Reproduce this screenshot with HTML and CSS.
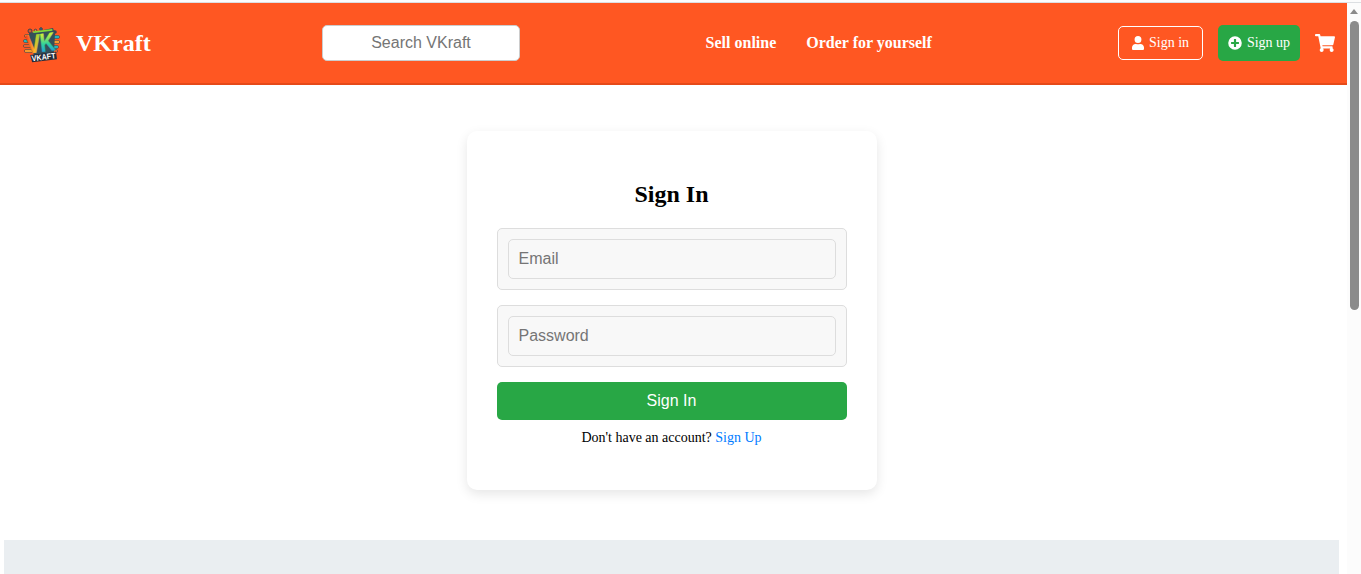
FILE: index.html
```html
<!DOCTYPE html>
<html lang="en">
<head>
<meta charset="utf-8">
<title>VKraft - Sign In</title>
<link rel="stylesheet" href="styles.css">
</head>
<body>
<div class="topline"></div>
<div class="viewport">
  <div class="page">
    <header class="header">
      <svg class="logo" viewBox="0 0 40 40" aria-label="VKraft logo">
        <g fill="none" stroke-linecap="round">
          <path stroke="#3b4650" stroke-width="3.600" d="M5 12h4M4 17h5M4 22h5M5 27h5M32 8h2M33 13h4M33 18h4M33 23h3M32 27h3"/>
          <path stroke="#f79a2c" stroke-width="2.400" d="M5 12h4M33 18h4M5 27h5"/>
          <path stroke="#25b3bd" stroke-width="2.400" d="M4 17h5M33 13h4M33 23h3"/>
          <path stroke="#f0602b" stroke-width="2.400" d="M4 22h5M32 27h3"/>
        </g>
        <path fill="#34505a" d="M8 9 32 4l2 6-1 18-19 5-5-10z"/>
        <circle cx="9" cy="7" r="2" fill="#d45632" stroke="#44404a"/>
        <circle cx="14.500" cy="6.500" r="1.300" fill="#e78a35" stroke="#44404a"/>
        <circle cx="20" cy="5" r="1.300" fill="#247ca0" stroke="#44404a"/>
        <defs>
          <linearGradient id="vee" x1="0" x2="1"><stop offset=".1" stop-color="#f5461f"/><stop offset=".5" stop-color="#ffb52c"/><stop offset="1" stop-color="#7fe03c"/></linearGradient>
          <linearGradient id="kay" x1="0" y1="0" x2="0" y2="1"><stop offset=".25" stop-color="#c4ee40"/><stop offset=".55" stop-color="#30d29c"/><stop offset=".85" stop-color="#1b9be0"/></linearGradient>
        </defs>
        <g transform="rotate(-7 20 20)">
          <text class="logo-big" x="5" y="28" fill="url(#vee)" stroke="url(#vee)" textLength="15" lengthAdjust="spacingAndGlyphs">V</text>
          <text class="logo-big" x="19" y="28" fill="url(#kay)" stroke="url(#kay)" textLength="15" lengthAdjust="spacingAndGlyphs">K</text>
          <path fill="#84dc38" d="M13 6.500h20v1.800H14z"/>
          <path fill="#252d3b" d="M8 29.500h26v7.500H9z"/>
          <text class="logo-small" x="9" y="36" textLength="24" lengthAdjust="spacingAndGlyphs">VKAFT</text>
        </g>
      </svg>
      <span class="brand">VKraft</span>
      <input class="search" type="text" placeholder="Search VKraft">
      <nav class="nav"><a>Sell online</a><a>Order for yourself</a></nav>
      <div class="actions">
        <a class="btn signin"><svg width="12" height="14" viewBox="0 0 448 512" preserveAspectRatio="none"><path fill="#fff" d="M224 256a128 128 0 1 0 0-256 128 128 0 0 0 0 256zm90 32h-17a174 174 0 0 1-146 0h-17C60 288 0 348 0 422v42c0 27 21 48 48 48h352c27 0 48-21 48-48v-42c0-74-60-134-134-134z"/></svg>Sign in</a>
        <a class="btn signup"><svg width="14" height="14" viewBox="0 0 512 512"><path fill="#fff" fill-rule="evenodd" d="M256 8a248 248 0 1 0 0 496 248 248 0 0 0 0-496zm144 276c0 7-5 12-12 12h-92v92c0 7-5 12-12 12h-56c-7 0-12-5-12-12v-92h-92c-7 0-12-5-12-12v-56c0-7 5-12 12-12h92v-92c0-7 5-12 12-12h56c7 0 12 5 12 12v92h92c7 0 12 5 12 12v56z"/></svg>Sign up</a>
        <svg class="cart" viewBox="0 0 576 512"><path fill="#fff" d="M528.120 301.319l47.273-208C578.806 78.301 567.391 64 551.990 64H159.208l-9.166-44.810C147.758 8.021 137.930 0 126.529 0H24C10.745 0 0 10.745 0 24v16c0 13.255 10.745 24 24 24h69.883l70.248 343.435C147.325 417.100 136 435.222 136 456c0 30.928 25.072 56 56 56s56-25.072 56-56c0-15.674-6.447-29.835-16.824-40h209.647C430.447 426.165 424 440.326 424 456c0 30.928 25.072 56 56 56s56-25.072 56-56c0-22.172-12.888-41.332-31.579-50.405l5.517-24.276c3.413-15.018-8.002-29.319-23.403-29.319H218.117l-6.545-32h293.145c11.206 0 20.920-7.754 23.403-18.681z"/></svg>
      </div>
    </header>
    <main class="main">
      <form class="card">
        <h2>Sign In</h2>
        <div class="field"><input type="email" placeholder="Email"></div>
        <div class="field"><input type="password" placeholder="Password"></div>
        <button class="submit" type="button">Sign In</button>
        <p class="switch">Don't have an account? <a>Sign Up</a></p>
      </form>
    </main>
    <div class="footer"></div>
  </div>
  <div class="scrollbar"><div class="arrow"></div><div class="thumb"></div></div>
</div>
</body>
</html>
```
FILE: styles.css
```css
* { box-sizing: border-box; }
body { margin: 0; height: 574px; overflow: hidden; background: #fff; font-family: "Liberation Serif", "Times New Roman", serif; }
.topline { height: 3px; background: #fcfcfc; border-bottom: 1px solid #dcdfe2; }
.viewport { display: flex; height: 571px; }
.page { width: 1347px; display: flex; flex-direction: column; }
.header { height: 82px; flex: none; display: flex; align-items: center; padding: 0 12px 0 21px; background: #ff5722; border-bottom: 2px solid #e64a19; color: #fff; }
.logo { width: 40px; height: 40px; flex: none; margin-top: 2px; }
.logo-big { font: bold 26px "Liberation Sans", Arial, sans-serif; stroke-width: .4px; }
.logo-small { font: bold 8px "Liberation Sans", Arial, sans-serif; fill: #fff; }
.brand { width: 246px; margin-left: 15px; font-size: 24px; font-weight: bold; }
.search { width: 198px; height: 36px; padding: 0 10px; border: 1px solid #ccc; border-radius: 5px; background: #fff; font: 16px "Liberation Sans", Arial, sans-serif; text-align: center; }
input::placeholder { color: #757575; opacity: 1; }
.nav { display: flex; gap: 30px; margin-left: 185.6px; font-size: 16px; font-weight: bold; white-space: nowrap; }
.actions { display: flex; align-items: center; gap: 15px; margin-left: auto; }
.btn { display: flex; align-items: center; justify-content: center; border-radius: 5px; font-size: 14px; white-space: nowrap; }
.signin { width: 85px; height: 34px; gap: 5px; border: 1px solid #fff; }
.signup { width: 82px; height: 36px; gap: 5px; background: #28a745; }
.cart { width: 20px; height: 18px; }
.main { height: 455px; flex: none; padding: 46px 3px 0 0; }
.card { width: 410px; height: 359px; margin: 0 auto; padding: 50px 30px 0; border-radius: 10px; background: #fff; box-shadow: 0 4px 12px rgba(0, 0, 0, .1); text-align: center; }
.card h2 { margin: 0 1px 20px 0; font-size: 24px; line-height: 27px; }
.field { height: 62px; margin-bottom: 15px; padding: 10px; border: 1px solid #ddd; border-radius: 5px; background: #f8f8f8; }
.field input { display: block; width: 100%; height: 40px; padding: 0 9.5px; border: 1px solid #ddd; border-radius: 5px; background: #f8f8f8; font: 16px "Liberation Sans", Arial, sans-serif; }
.submit { display: block; width: 100%; height: 38px; padding: 0 1px 0 0; border: 0; border-radius: 5px; background: #28a745; color: #fff; font: 16px "Liberation Sans", Arial, sans-serif; }
.switch { margin: 10px 1px 0 0; font-size: 14px; line-height: 16px; }
.switch a { color: #007bff; }
.footer { height: 34px; margin: 0 8px 0 4px; background: #eaeef1; }
.scrollbar { width: 14px; padding: 6px 2px 0 3px; background: #fcfcfc; }
.arrow { width: 0; height: 0; border: solid transparent; border-width: 0 4.5px 5px; border-bottom-color: #8b8b8b; }
.thumb { width: 9px; height: 289px; margin-top: 7px; border-radius: 5px; background: #8b8b8b; }
```
